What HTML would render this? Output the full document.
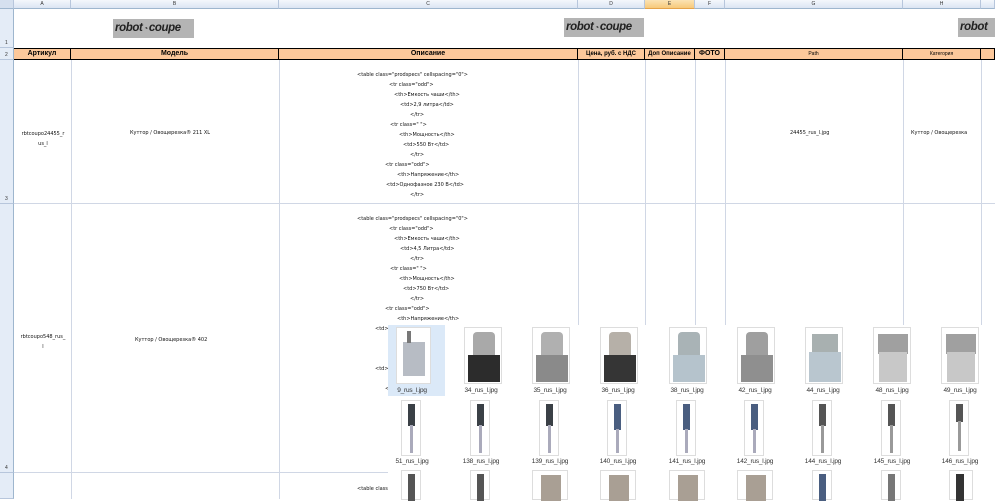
<!DOCTYPE html>
<html><head><meta charset="utf-8"><style>
*{margin:0;padding:0;box-sizing:border-box}
body{width:995px;height:499px;overflow:hidden;background:#fff;font-family:"Liberation Sans",sans-serif;position:relative}
.a{position:absolute}
.ch{top:0;height:9px;background:linear-gradient(#f4f7fc,#dbe5f3);border-right:1px solid #b7c6dc;border-bottom:1px solid #9eb6ce;font-size:5px;color:#333;text-align:center;line-height:9px}
.rh{left:0;width:14px;background:#e4ecf7;border-bottom:1px solid #b7c6dc;border-right:1px solid #9eb6ce;font-size:5px;color:#333}
.rh span{position:absolute;left:5px;bottom:1px}
.vl{width:1px;background:#d0d7e5}
.hl{height:1px;background:#d0d7e5;left:14px;right:0}
.hd{top:48px;height:12px;background:#fcc89b;border:1px solid #000;border-left:none;font-size:7px;font-weight:bold;text-align:center;line-height:10px;color:#000}
.logo{background:#b4b4b4;color:#222;font-weight:bold;font-style:italic;font-size:11.5px;line-height:19px;height:19px;padding-left:2px;letter-spacing:-0.4px;white-space:nowrap;overflow:hidden}
.logo i{font-size:8px;font-style:normal;color:#333;margin:0 1px}
.t{font-size:5px;color:#111;white-space:nowrap;font-family:"DejaVu Sans",sans-serif}
.ov{left:388px;top:325px;width:607px;height:174px;background:#fff}
.img{border:1px solid #ddd;background:#fff}
.lb{font-size:6.5px;color:#333;width:68px;text-align:center;white-space:nowrap;letter-spacing:-0.2px}
</style></head><body>
<div class="a ch" style="left:0;width:14px;background:#d5e0ef"></div>
<div class="a ch" style="left:14px;width:57px">A</div>
<div class="a ch" style="left:71px;width:208px">B</div>
<div class="a ch" style="left:279px;width:299px">C</div>
<div class="a ch" style="left:578px;width:67px">D</div>
<div class="a ch" style="left:645px;width:50px;background:linear-gradient(#fbe3b4,#f7c97a);border-bottom:1px solid #e5a44b">E</div>
<div class="a ch" style="left:695px;width:30px">F</div>
<div class="a ch" style="left:725px;width:178px">G</div>
<div class="a ch" style="left:903px;width:78px">H</div>
<div class="a ch" style="left:981px;width:14px"></div>
<div class="a rh" style="top:9px;height:39px"><span>1</span></div>
<div class="a rh" style="top:48px;height:12px"><span>2</span></div>
<div class="a rh" style="top:60px;height:144px"><span>3</span></div>
<div class="a rh" style="top:204px;height:269px"><span>4</span></div>
<div class="a rh" style="top:473px;height:26px"></div>
<div class="a vl" style="left:71px;top:60px;height:439px"></div>
<div class="a vl" style="left:279px;top:60px;height:439px"></div>
<div class="a vl" style="left:578px;top:60px;height:439px"></div>
<div class="a vl" style="left:645px;top:60px;height:439px"></div>
<div class="a vl" style="left:695px;top:60px;height:439px"></div>
<div class="a vl" style="left:725px;top:60px;height:439px"></div>
<div class="a vl" style="left:903px;top:60px;height:439px"></div>
<div class="a vl" style="left:981px;top:60px;height:439px"></div>
<div class="a hl" style="top:203px"></div>
<div class="a hl" style="top:472px"></div>
<div class="a logo" style="left:113px;top:19px;width:81px">robot<i>◔</i>coupe</div>
<div class="a logo" style="left:564px;top:18px;width:80px">robot<i>◔</i>coupe</div>
<div class="a logo" style="left:958px;top:18px;width:37px">robot</div>
<div class="a hd" style="left:14px;width:57px">Артикул</div>
<div class="a hd" style="left:71px;width:208px">Модель</div>
<div class="a hd" style="left:279px;width:299px">Описание</div>
<div class="a hd" style="left:578px;width:67px;font-size:6px">Цена, руб. с НДС</div>
<div class="a hd" style="left:645px;width:50px;font-size:6px">Доп Описание</div>
<div class="a hd" style="left:695px;width:30px">ФОТО</div>
<div class="a hd" style="left:725px;width:178px;font-size:5px;font-weight:normal">Path</div>
<div class="a hd" style="left:903px;width:78px;font-size:5px;font-weight:normal">Категория</div>
<div class="a hd" style="left:981px;width:14px"></div>
<div class="a t" style="left:16px;top:129px;width:54px;text-align:center;line-height:10px">rbtcoupo24455_r<br>us_l</div>
<div class="a t" style="left:130px;top:130px">Куттор / Овощерезка® 211 XL</div>
<div class="a t" style="left:357px;top:72px">&lt;table class="prodspecs" cellspacing="0"&gt;</div>
<div class="a t" style="left:389px;top:82px">&lt;tr class="odd"&gt;</div>
<div class="a t" style="left:394px;top:92px">&lt;th&gt;Емкость чаши&lt;/th&gt;</div>
<div class="a t" style="left:400px;top:102px">&lt;td&gt;2,9 литра&lt;/td&gt;</div>
<div class="a t" style="left:410px;top:112px">&lt;/tr&gt;</div>
<div class="a t" style="left:390px;top:122px">&lt;tr class=" "&gt;</div>
<div class="a t" style="left:399px;top:132px">&lt;th&gt;Мощность&lt;/th&gt;</div>
<div class="a t" style="left:403px;top:142px">&lt;td&gt;550 Вт&lt;/td&gt;</div>
<div class="a t" style="left:410px;top:152px">&lt;/tr&gt;</div>
<div class="a t" style="left:385px;top:162px">&lt;tr class="odd"&gt;</div>
<div class="a t" style="left:397px;top:172px">&lt;th&gt;Напряжение&lt;/th&gt;</div>
<div class="a t" style="left:386px;top:182px">&lt;td&gt;Однофазное 230 В&lt;/td&gt;</div>
<div class="a t" style="left:410px;top:192px">&lt;/tr&gt;</div>
<div class="a t" style="left:790px;top:130px">24455_rus_l.jpg</div>
<div class="a t" style="left:911px;top:130px">Куттор / Овощерезка</div>
<div class="a t" style="left:16px;top:332px;width:54px;text-align:center;line-height:10px">rbtcoupo548_rus_<br>l</div>
<div class="a t" style="left:135px;top:337px">Куттор / Овощерезка® 402</div>
<div class="a t" style="left:357px;top:216px">&lt;table class="prodspecs" cellspacing="0"&gt;</div>
<div class="a t" style="left:389px;top:226px">&lt;tr class="odd"&gt;</div>
<div class="a t" style="left:394px;top:236px">&lt;th&gt;Емкость чаши&lt;/th&gt;</div>
<div class="a t" style="left:400px;top:246px">&lt;td&gt;4,5 Литра&lt;/td&gt;</div>
<div class="a t" style="left:410px;top:256px">&lt;/tr&gt;</div>
<div class="a t" style="left:390px;top:266px">&lt;tr class=" "&gt;</div>
<div class="a t" style="left:399px;top:276px">&lt;th&gt;Мощность&lt;/th&gt;</div>
<div class="a t" style="left:403px;top:286px">&lt;td&gt;750 Вт&lt;/td&gt;</div>
<div class="a t" style="left:410px;top:296px">&lt;/tr&gt;</div>
<div class="a t" style="left:385px;top:306px">&lt;tr class="odd"&gt;</div>
<div class="a t" style="left:397px;top:316px">&lt;th&gt;Напряжение&lt;/th&gt;</div>
<div class="a t" style="left:375px;top:326px">&lt;td&gt;</div>
<div class="a t" style="left:375px;top:366px">&lt;td&gt;75</div>
<div class="a t" style="left:385px;top:386px">&lt;</div>
<div class="a t" style="left:357px;top:486px">&lt;table class</div>
<div class="a ov"></div>
<div class="a" style="left:388px;top:325px;width:57px;height:71px;background:#dbe9f8"></div>
<div class="a img" style="left:396px;top:327px;width:35px;height:57px"><div class="a" style="left:6px;top:14px;width:22px;height:34px;background:#b7bcc4"></div><div class="a" style="left:10px;top:3px;width:4px;height:12px;background:#777"></div></div>
<div class="a img" style="left:464px;top:327px;width:38px;height:57px"><div class="a" style="left:8px;top:4px;width:22px;height:24px;background:#a9a9a9;border-radius:4px 4px 0 0"></div><div class="a" style="left:3px;top:27px;width:32px;height:27px;background:#2c2c2c"></div></div>
<div class="a img" style="left:532px;top:327px;width:38px;height:57px"><div class="a" style="left:8px;top:4px;width:22px;height:24px;background:#b0b0b0;border-radius:4px 4px 0 0"></div><div class="a" style="left:3px;top:27px;width:32px;height:27px;background:#8a8a8a"></div></div>
<div class="a img" style="left:600px;top:327px;width:38px;height:57px"><div class="a" style="left:8px;top:4px;width:22px;height:24px;background:#b6b0a8;border-radius:4px 4px 0 0"></div><div class="a" style="left:3px;top:27px;width:32px;height:27px;background:#353535"></div></div>
<div class="a img" style="left:669px;top:327px;width:38px;height:57px"><div class="a" style="left:8px;top:4px;width:22px;height:24px;background:#a9b3b6;border-radius:4px 4px 0 0"></div><div class="a" style="left:3px;top:27px;width:32px;height:27px;background:#b5c3cc"></div></div>
<div class="a img" style="left:737px;top:327px;width:38px;height:57px"><div class="a" style="left:8px;top:4px;width:22px;height:24px;background:#9f9f9f;border-radius:4px 4px 0 0"></div><div class="a" style="left:3px;top:27px;width:32px;height:27px;background:#8f8f8f"></div></div>
<div class="a img" style="left:805px;top:327px;width:38px;height:57px"><div class="a" style="left:6px;top:6px;width:26px;height:20px;background:#a8b0b0"></div><div class="a" style="left:3px;top:24px;width:32px;height:30px;background:#b9c6cf"></div></div>
<div class="a img" style="left:873px;top:327px;width:38px;height:57px"><div class="a" style="left:4px;top:6px;width:30px;height:20px;background:#a0a0a0"></div><div class="a" style="left:5px;top:24px;width:28px;height:30px;background:#c8c8c8"></div></div>
<div class="a img" style="left:941px;top:327px;width:38px;height:57px"><div class="a" style="left:4px;top:6px;width:30px;height:20px;background:#a0a0a0"></div><div class="a" style="left:5px;top:24px;width:28px;height:30px;background:#c8c8c8"></div></div>
<div class="a lb" style="left:378px;top:387px">9_rus_l.jpg</div>
<div class="a lb" style="left:447px;top:387px">34_rus_l.jpg</div>
<div class="a lb" style="left:516px;top:387px">35_rus_l.jpg</div>
<div class="a lb" style="left:584px;top:387px">36_rus_l.jpg</div>
<div class="a lb" style="left:653px;top:387px">38_rus_l.jpg</div>
<div class="a lb" style="left:721px;top:387px">42_rus_l.jpg</div>
<div class="a lb" style="left:789px;top:387px">44_rus_l.jpg</div>
<div class="a lb" style="left:858px;top:387px">48_rus_l.jpg</div>
<div class="a lb" style="left:926px;top:387px">49_rus_l.jpg</div>
<div class="a img" style="left:401px;top:400px;width:20px;height:56px"><div class="a" style="left:6px;top:3px;width:7px;height:22px;background:#3a4046"></div><div class="a" style="left:8px;top:24px;width:3px;height:28px;background:#aab"></div></div>
<div class="a img" style="left:470px;top:400px;width:20px;height:56px"><div class="a" style="left:6px;top:3px;width:7px;height:22px;background:#3a4046"></div><div class="a" style="left:8px;top:24px;width:3px;height:28px;background:#aab"></div></div>
<div class="a img" style="left:539px;top:400px;width:20px;height:56px"><div class="a" style="left:6px;top:3px;width:7px;height:22px;background:#3a4046"></div><div class="a" style="left:8px;top:24px;width:3px;height:28px;background:#aab"></div></div>
<div class="a img" style="left:607px;top:400px;width:20px;height:56px"><div class="a" style="left:6px;top:3px;width:7px;height:26px;background:#4a5e80"></div><div class="a" style="left:8px;top:28px;width:3px;height:24px;background:#aab"></div></div>
<div class="a img" style="left:676px;top:400px;width:20px;height:56px"><div class="a" style="left:6px;top:3px;width:7px;height:26px;background:#4a5e80"></div><div class="a" style="left:8px;top:28px;width:3px;height:24px;background:#aab"></div></div>
<div class="a img" style="left:744px;top:400px;width:20px;height:56px"><div class="a" style="left:6px;top:3px;width:7px;height:26px;background:#4a5e80"></div><div class="a" style="left:8px;top:28px;width:3px;height:24px;background:#aab"></div></div>
<div class="a img" style="left:812px;top:400px;width:20px;height:56px"><div class="a" style="left:6px;top:3px;width:7px;height:22px;background:#555"></div><div class="a" style="left:8px;top:24px;width:3px;height:28px;background:#999"></div></div>
<div class="a img" style="left:881px;top:400px;width:20px;height:56px"><div class="a" style="left:6px;top:3px;width:7px;height:22px;background:#555"></div><div class="a" style="left:8px;top:24px;width:3px;height:28px;background:#999"></div></div>
<div class="a img" style="left:949px;top:400px;width:20px;height:56px"><div class="a" style="left:6px;top:3px;width:7px;height:18px;background:#555"></div><div class="a" style="left:8px;top:20px;width:3px;height:30px;background:#999"></div></div>
<div class="a lb" style="left:378px;top:458px">51_rus_l.jpg</div>
<div class="a lb" style="left:447px;top:458px">138_rus_l.jpg</div>
<div class="a lb" style="left:516px;top:458px">139_rus_l.jpg</div>
<div class="a lb" style="left:584px;top:458px">140_rus_l.jpg</div>
<div class="a lb" style="left:653px;top:458px">141_rus_l.jpg</div>
<div class="a lb" style="left:721px;top:458px">142_rus_l.jpg</div>
<div class="a lb" style="left:789px;top:458px">144_rus_l.jpg</div>
<div class="a lb" style="left:858px;top:458px">145_rus_l.jpg</div>
<div class="a lb" style="left:926px;top:458px">146_rus_l.jpg</div>
<div class="a img" style="left:401px;top:470px;width:20px;height:30px"><div class="a" style="left:6px;top:3px;width:7px;height:27px;background:#555"></div></div>
<div class="a img" style="left:470px;top:470px;width:20px;height:30px"><div class="a" style="left:6px;top:3px;width:7px;height:27px;background:#555"></div></div>
<div class="a img" style="left:532px;top:470px;width:36px;height:30px"><div class="a" style="left:8px;top:4px;width:20px;height:26px;background:#a99f94"></div></div>
<div class="a img" style="left:600px;top:470px;width:36px;height:30px"><div class="a" style="left:8px;top:4px;width:20px;height:26px;background:#a99f94"></div></div>
<div class="a img" style="left:669px;top:470px;width:36px;height:30px"><div class="a" style="left:8px;top:4px;width:20px;height:26px;background:#a99f94"></div></div>
<div class="a img" style="left:737px;top:470px;width:36px;height:30px"><div class="a" style="left:8px;top:4px;width:20px;height:26px;background:#a99f94"></div></div>
<div class="a img" style="left:812px;top:470px;width:20px;height:30px"><div class="a" style="left:6px;top:3px;width:7px;height:27px;background:#4a5e80"></div></div>
<div class="a img" style="left:881px;top:470px;width:20px;height:30px"><div class="a" style="left:6px;top:3px;width:7px;height:27px;background:#777"></div></div>
<div class="a img" style="left:949px;top:470px;width:24px;height:30px"><div class="a" style="left:6px;top:3px;width:8px;height:27px;background:#333"></div></div>
</body></html>
